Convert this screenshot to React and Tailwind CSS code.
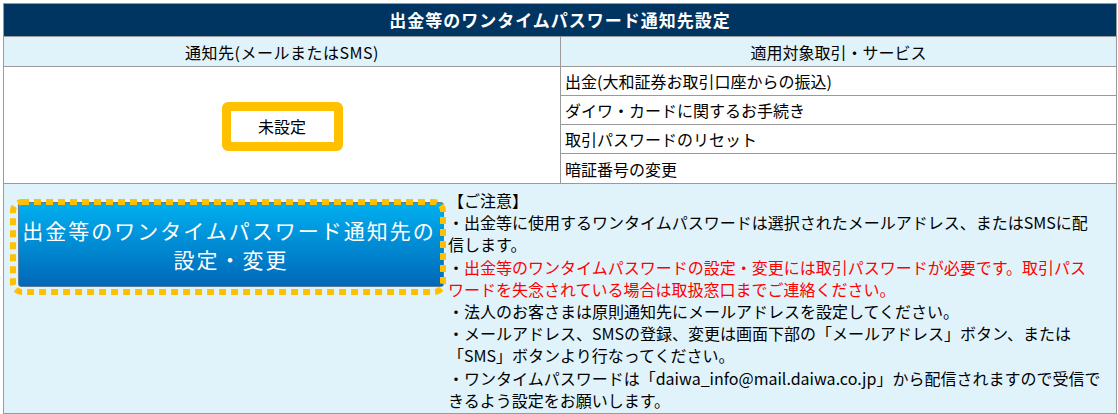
import React from "react";

/* =======================
   OTP notification settings table
======================= */
const services = [
  "出金(大和証券お取引口座からの振込)",
  "ダイワ・カードに関するお手続き",
  "取引パスワードのリセット",
  "暗証番号の変更",
];

const App = () => {
  return (
    <div
      className="pl-[3px] pt-[3px] bg-white text-black"
      style={{ fontFamily: '"Noto Sans CJK JP", "Noto Sans", sans-serif' }}
    >
      <div className="w-[1114px] border border-[#9a9a9a] text-[16px]">
        {/* Title */}
        <div className="h-[32px] bg-[#003461] text-white font-bold text-[17px] tracking-[1px] flex items-center justify-center">
          出金等のワンタイムパスワード通知先設定
        </div>

        {/* Header */}
        <div className="flex h-[30px] border-t border-[#9a9a9a] bg-[#e0f3fa]">
          <div className="w-[557px] border-r border-[#9a9a9a] flex items-center justify-center tracking-[0.5px]">
            通知先(メールまたはSMS)
          </div>
          <div className="flex-1 flex items-center justify-center">
            適用対象取引・サービス
          </div>
        </div>

        {/* Body */}
        <div className="flex border-t border-[#9a9a9a] bg-white">
          <div className="w-[557px] border-r border-[#9a9a9a] flex items-center justify-center">
            <div className="w-[121px] h-[49px] mt-[2px] border-[9px] border-[#ffc000] rounded-[6px] bg-white flex items-center justify-center">
              未設定
            </div>
          </div>
          <div className="flex-1 flex flex-col">
            {services.map((s, i) => (
              <div
                key={s}
                className={`h-[29px] flex items-center pl-[4px] ${
                  i < services.length - 1 ? "border-b border-[#9a9a9a]" : ""
                }`}
              >
                {s}
              </div>
            ))}
          </div>
        </div>

        {/* Notes */}
        <div className="flex border-t border-[#9a9a9a] bg-[#e0f3fa]">
          <div className="w-[444px] pt-[15px] pl-[6px]">
            <div className="relative w-[436px] h-[96px] pt-[3px] pl-[8px] pr-[2px]">
              <div className="h-[85px] rounded-[3px] border border-[#5b7c99] bg-gradient-to-b from-[#00b0f0] to-[#0068b8] text-white text-[21px] tracking-[2px] leading-[29px] flex flex-col items-center justify-center">
                <span className="whitespace-nowrap -ml-[4px]">出金等のワンタイムパスワード通知先の</span>
                <span>設定・変更</span>
              </div>
              {/* dashed focus outline */}
              <svg className="absolute inset-0" width="436" height="96" viewBox="0 0 436 96">
                <rect
                  x="3"
                  y="3"
                  width="430"
                  height="90"
                  rx="9"
                  fill="none"
                  stroke="#ffc000"
                  strokeWidth="6"
                  strokeDasharray="7 5"
                />
              </svg>
            </div>
          </div>
          <div className="flex-1 pt-[5px] pb-[2px] leading-[22.2px] whitespace-nowrap">
            【ご注意】
            <br />
            ・出金等に使用するワンタイムパスワードは選択されたメールアドレス、またはSMSに配
            <br />
            信します。
            <br />
            ・
            <span className="text-[#ff0000]">
              出金等のワンタイムパスワードの設定・変更には取引パスワードが必要です。取引パス
              <br />
              ワードを失念されている場合は取扱窓口までご連絡ください。
            </span>
            <br />
            ・法人のお客さまは原則通知先にメールアドレスを設定してください。
            <br />
            ・メールアドレス、SMSの登録、変更は画面下部の「メールアドレス」ボタン、または
            <br />
            「SMS」ボタンより行なってください。
            <br />
            ・ワンタイムパスワードは「daiwa_info@mail.daiwa.co.jp」から配信されますので受信で
            <br />
            きるよう設定をお願いします。
          </div>
        </div>
      </div>
    </div>
  );
};

export default App;
